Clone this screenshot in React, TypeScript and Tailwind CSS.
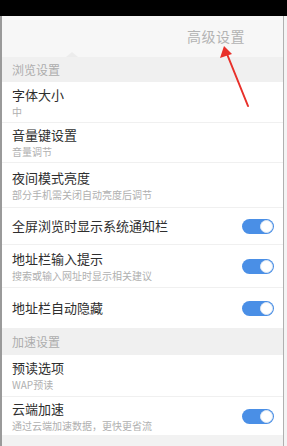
import React from 'react';

interface SettingRow {
  id: number;
  title: string;
  sub?: string;
  toggle?: boolean;
  h: string;
}

const browseRows: SettingRow[] = [
  { id: 1, title: '字体大小', sub: '中', h: 'h-[41px]' },
  { id: 2, title: '音量键设置', sub: '音量调节', h: 'h-[40px]' },
  { id: 3, title: '夜间模式亮度', sub: '部分手机需关闭自动亮度后调节', h: 'h-[45px]' },
  { id: 4, title: '全屏浏览时显示系统通知栏', toggle: true, h: 'h-[37px]' },
  { id: 5, title: '地址栏输入提示', sub: '搜索或输入网址时显示相关建议', toggle: true, h: 'h-[43px]' },
  { id: 6, title: '地址栏自动隐藏', toggle: true, h: 'h-[40px]' },
];

const speedRows: SettingRow[] = [
  { id: 7, title: '预读选项', sub: 'WAP预读', h: 'h-[42px]' },
  { id: 8, title: '云端加速', sub: '通过云端加速数据，更快更省流', toggle: true, h: 'h-[38px]' },
];

const Toggle = () => (
  <div className="w-[32px] h-[15px] rounded-full bg-[#4a8fe6] flex items-center justify-end pr-[1px]">
    <div className="w-[13px] h-[13px] rounded-full bg-white border border-[#dfe8f3]" />
  </div>
);

const Row = ({ row, last }: { row: SettingRow; last?: boolean }) => (
  <div className={`${row.h} flex items-center pl-[10px] pr-[9px] ${last ? '' : 'border-b border-[#f0f0f0]'}`}>
    <div className="flex-1 flex flex-col">
      <div className="text-[13px] leading-[16px] text-[#2e2e2e]">{row.title}</div>
      {row.sub && <div className="text-[10px] leading-[13px] mt-[2px] text-[#b0b0b0]">{row.sub}</div>}
    </div>
    {row.toggle && <Toggle />}
  </div>
);

const SectionHeader = ({ label, h }: { label: string; h: string }) => (
  <div className={`${h} bg-[#f0f0f0] flex items-center pl-[10px] text-[12px] text-[#adadad]`}>{label}</div>
);

const App: React.FC = () => {
  return (
    <div
      className="relative w-[287px] h-[446px] overflow-hidden bg-black flex flex-col"
      style={{ fontFamily: '"Noto Sans CJK SC", "Noto Sans", sans-serif' }}
    >
      <div className="h-[16px] shrink-0 bg-black" />
      <div className="flex-1 flex bg-white">
        <div className="w-[2px] bg-[#9a9a9a]" />
        <div className="flex-1 flex flex-col bg-white">
          <div className="relative h-[41px] shrink-0 bg-[#f7f7f7] flex items-center justify-end pr-[38px]">
            <span className="text-[14px] text-[#b3b3b3] tracking-[0.5px]">高级设置</span>
            <div className="absolute left-[64px] bottom-0 w-0 h-0 border-l-[6px] border-r-[6px] border-b-[5px] border-l-transparent border-r-transparent border-b-[#ececec]" />
          </div>
          <SectionHeader label="浏览设置" h="h-[25px]" />
          {browseRows.map((r, i) => (
            <Row key={r.id} row={r} last={i === browseRows.length - 1} />
          ))}
          <SectionHeader label="加速设置" h="h-[27px]" />
          {speedRows.map((r, i) => (
            <Row key={r.id} row={r} last={i === speedRows.length - 1} />
          ))}
          <div className="flex-1 bg-[#f2f2f2]" />
        </div>
        <div className="w-[1px] bg-[#b0b0b0]" />
        <div className="w-[3px] bg-[#f4f4f4]" />
      </div>

      <svg className="absolute left-0 top-0" width="287" height="446" viewBox="0 0 287 446">
        <line x1="248" y1="106" x2="227" y2="54" stroke="#e8302a" strokeWidth="2" strokeLinecap="round" />
        <polygon points="224,46 220,58 232,54" fill="#e8302a" />
      </svg>
    </div>
  );
};

export default App;
